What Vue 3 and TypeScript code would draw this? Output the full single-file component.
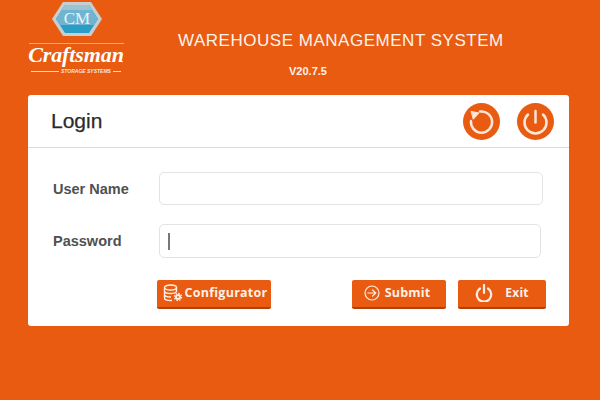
<script setup lang="ts">
const title = 'WAREHOUSE MANAGEMENT SYSTEM'
const version = 'V20.7.5'
</script>

<template>
  <div class="page">
    <header class="top">
      <div class="logo">
        <svg class="hex" width="50" height="34" viewBox="0 0 50 34">
          <polygon points="11,0 39,0 50,17 39,34 11,34 0,17" fill="#c6ced2" />
          <polygon points="13,3 37,3 46,17 37,31 13,31 4,17" fill="#2a9dc6" />
          <polygon points="13,3 37,3 46,17 42,23 8,23 4,17" fill="#6fb4d0" />
          <polygon points="13,3 37,3 40,8 10,8" fill="#9cc3d2" />
        </svg>
        <span class="cm">CM</span>
        <div class="rule"></div>
        <div class="brand">Craftsman</div>
        <div class="sub"><i></i><span>STORAGE SYSTEMS</span><i></i></div>
      </div>
      <div class="heading">
        <h1>{{ title }}</h1>
        <p>{{ version }}</p>
      </div>
    </header>

    <section class="card">
      <div class="card-head">
        <h2>Login</h2>
        <div class="round-btns">
          <button class="round" type="button" aria-label="Refresh">
            <svg width="37" height="37" viewBox="0 0 37 37" fill="none" stroke="#fbe6da" stroke-width="2.5" stroke-linecap="round">
              <path d="M8 18 A10.6 10.6 0 1 0 17 8.6" />
              <path d="M8.5 8.5 L16 10 L10.5 16 Z" fill="#fbe6da" stroke-width="1" stroke-linejoin="round" />
            </svg>
          </button>
          <button class="round" type="button" aria-label="Power">
            <svg width="37" height="37" viewBox="0 0 37 37" fill="none" stroke="#fbe6da" stroke-width="2.5" stroke-linecap="round">
              <path d="M11 11.5 A11 11 0 1 0 26 11.5" />
              <path d="M18.5 8 V19.5" />
            </svg>
          </button>
        </div>
      </div>

      <form class="form" @submit.prevent>
        <div class="row first">
          <label for="user">User Name</label>
          <input id="user" class="long" type="text" />
        </div>
        <div class="row second">
          <label for="pass">Password</label>
          <div class="field">
            <span class="caret"></span>
          </div>
        </div>
        <div class="actions">
          <button class="btn config" type="button">
            <svg width="20" height="18" viewBox="0 0 20 18" fill="none" stroke="#fdeee5" stroke-width="1.4">
              <ellipse cx="7.5" cy="3.5" rx="6" ry="2.5" />
              <path d="M1.5 3.5 V14 C1.5 15.5 4 16.5 7.5 16.5 H9 M13.5 3.5 V8 M1.5 7 C1.5 8.5 4 9.5 7.5 9.5 S 13 8.8 13.5 7.5 M1.5 10.5 C1.5 12 4 13 8 13" />
              <circle cx="15" cy="13" r="2" stroke-width="2" />
              <circle cx="15" cy="13" r="3.6" stroke-dasharray="1.6 1.2" stroke-width="1.2" />
            </svg>
            <span>Configurator</span>
          </button>
          <div class="right">
            <button class="btn submit" type="submit">
              <svg width="16" height="16" viewBox="0 0 16 16" fill="none" stroke="#fdeee5" stroke-width="1.2" stroke-linecap="round" stroke-linejoin="round">
                <circle cx="8" cy="8" r="7" />
                <path d="M3.8 8 H11.5 M8.5 5 L11.8 8 L8.5 11" />
              </svg>
              <span>Submit</span>
            </button>
            <button class="btn exit" type="button">
              <svg width="18" height="18" viewBox="0 0 18 18" fill="none" stroke="#fdeee5" stroke-width="2.2" stroke-linecap="round">
                <path d="M5 4.5 A7.2 7.2 0 1 0 13 4.5" />
                <path d="M9 1 V9" />
              </svg>
              <span>Exit</span>
            </button>
          </div>
        </div>
      </form>
    </section>
  </div>
</template>

<style>
html, body { margin: 0; background: #e85b10; }
</style>

<style scoped>
.page {
  width: 600px;
  height: 400px;
  overflow: hidden;
  background: #e85b10;
  font-family: "Liberation Sans", Arial, sans-serif;
  box-sizing: border-box;
  padding-left: 28px;
}
.top {
  height: 95px;
  display: flex;
}
.logo {
  position: relative;
  width: 96px;
  padding-top: 2px;
  display: flex;
  flex-direction: column;
  align-items: center;
  color: #fff;
}
.hex { display: block; margin-left: 1px; }
.cm {
  position: absolute;
  top: 9px;
  left: 30px;
  width: 38px;
  font: 17px/20px "Liberation Serif", serif;
  color: #e9f4f8;
  text-align: center;
}
.rule {
  width: 95px;
  height: 1px;
  margin-top: 7px;
  background: #f3a97f;
}
.brand {
  margin-top: 2px;
  font: italic bold 22px/18px "Liberation Serif", serif;
  letter-spacing: -0.1px;
  color: #fff;
  white-space: nowrap;
}
.sub {
  display: flex;
  align-items: center;
  gap: 2px;
  margin-top: 4px;
  width: 90px;
  height: 6px;
}
.sub i {
  height: 1px;
  background: #fbd9c5;
}
.sub i:first-child { width: 28px; }
.sub i:last-child { flex: 1; }
.sub span {
  font: italic bold 5px/6px "Liberation Sans", sans-serif;
  color: #fbe6da;
  white-space: nowrap;
}
.heading {
  width: 325px;
  margin-left: 54px;
  color: #fdf3ec;
}
h1 {
  margin: 31px 0 0;
  font-size: 17px;
  font-weight: 400;
  line-height: 19px;
  letter-spacing: 0.52px;
  white-space: nowrap;
}
p {
  margin: 15px 0 0 111px;
  font-size: 11px;
  font-weight: 700;
  line-height: 13px;
}
.card {
  width: 541px;
  height: 231px;
  background: #fff;
  border-radius: 3px;
}
.card-head {
  height: 52px;
  border-bottom: 1px solid #dcdcdc;
  display: flex;
  align-items: center;
  justify-content: space-between;
  padding: 0 15px 0 23px;
}
h2 {
  margin: 0;
  font-size: 21px;
  font-weight: 400;
  color: #2b2b2b;
  -webkit-text-stroke: 0.25px #2b2b2b;
}
.round-btns {
  display: flex;
  gap: 17px;
}
.round {
  width: 37px;
  height: 37px;
  padding: 0;
  border: 0;
  border-radius: 50%;
  background: #e85b10;
}
.round svg { display: block; }
.form { padding: 0 23px 0 25px; }
.row {
  display: flex;
  align-items: center;
}
.row.first { margin-top: 24px; }
.row.second { margin-top: 19px; }
label {
  width: 106px;
  font-size: 14.5px;
  font-weight: 700;
  color: #505050;
}
.long, .field {
  box-sizing: border-box;
  border: 1px solid #e3e3e3;
  border-radius: 5px;
  background: #fff;
  outline: none;
}
.long {
  width: 384px;
  height: 33px;
  padding: 0;
}
.field {
  width: 382px;
  height: 34px;
  padding-left: 8px;
  display: flex;
  align-items: center;
}
.caret {
  width: 1.5px;
  height: 17px;
  background: #777;
}
.actions {
  display: flex;
  justify-content: space-between;
  margin: 22px 0 0 104px;
  width: 389px;
}
.right {
  display: flex;
  gap: 12px;
}
.btn {
  box-sizing: border-box;
  height: 29px;
  display: flex;
  align-items: center;
  justify-content: center;
  padding: 0 0 2px;
  border: 0;
  border-bottom: 2px solid #b04208;
  border-radius: 2px;
  background: #e85b10;
  color: #fdf0e8;
  font-family: "Open Sans", "Liberation Sans", sans-serif;
  font-weight: 700;
  font-size: 12.5px;
  letter-spacing: 0.2px;
  white-space: nowrap;
}
.config { width: 114px; gap: 2px; padding-left: 2px; letter-spacing: 0.25px; }
.submit { width: 94px; gap: 5px; padding-right: 4px; }
.exit { width: 88px; gap: 12px; font-size: 12px; }
</style>
